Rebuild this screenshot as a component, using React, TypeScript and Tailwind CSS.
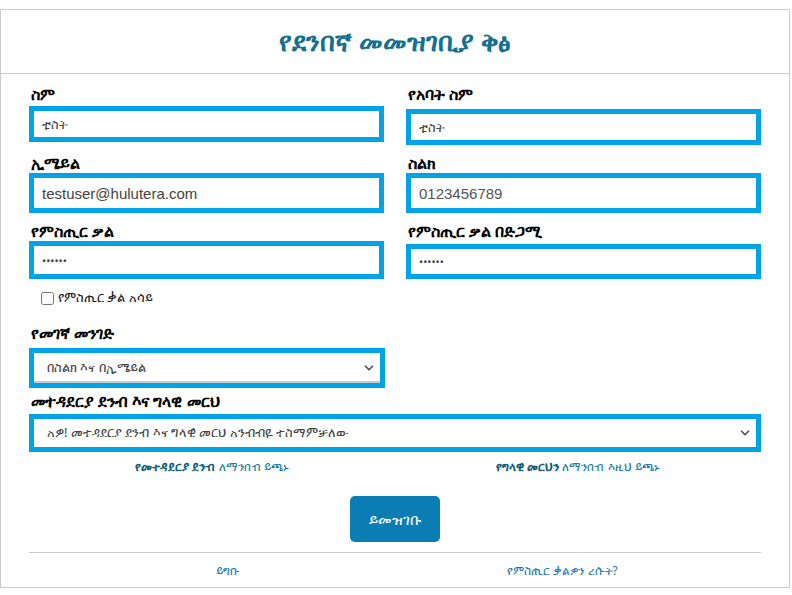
import { ChevronDown } from "lucide-react";

const font = { fontFamily: '"Noto Sans", "DejaVu Sans", "Liberation Sans", sans-serif' };

function Label({ children }: { children: React.ReactNode }) {
	return <label className="block h-[20px] pl-[2px] text-[16px] font-bold leading-[20px] text-black">{children}</label>;
}

const boxCls =
	"block w-full border-[5px] border-[#00a3e8] bg-white px-[8px] text-[#444] outline-none";

export default function App() {
	return (
		<div className="h-[595px] w-full bg-white pt-[9px]" style={font}>
			<div className="mr-[2px] border border-[#cccccc] pb-[8px]">
				<div className="flex h-[64px] items-center justify-center border-b border-[#cccccc]">
					<h1 className="text-[26px] font-bold text-[#14708f]">የደንበኛ መመዝገቢያ ቅፅ</h1>
				</div>

				<form className="px-[28px] pt-[10px]">
					<div className="grid grid-cols-2 gap-x-[22px]">
						<div>
							<Label>ስም</Label>
							<input readOnly defaultValue="ቲስት" className={`${boxCls} mt-[2px] h-[36px] text-[13px]`} />
							<div className="mt-[11px]">
								<Label>ኢሜይል</Label>
							</div>
							<input
								readOnly
								defaultValue="testuser@hulutera.com"
								className={`${boxCls} h-[40px] bg-[#e8f0fe] text-[15px] text-[#222]`}
								style={{ fontFamily: '"Liberation Sans", Arial, sans-serif' }}
							/>
							<div className="mt-[8px]">
								<Label>የምስጢር ቃል</Label>
							</div>
							<input readOnly type="password" defaultValue="123456" className={`${boxCls} h-[38px] text-[11px]`} />
						</div>
						<div>
							<Label>የአባት ስም</Label>
							<input readOnly defaultValue="ቲስት" className={`${boxCls} mt-[5px] h-[36px] text-[13px]`} />
							<div className="mt-[8px]">
								<Label>ስልክ</Label>
							</div>
							<input
								readOnly
								defaultValue="0123456789"
								className={`${boxCls} h-[40px] text-[15px] text-[#555]`}
								style={{ fontFamily: '"Liberation Sans", Arial, sans-serif' }}
							/>
							<div className="mt-[8px]">
								<Label>የምስጢር ቃል በድጋሚ</Label>
							</div>
							<input readOnly type="password" defaultValue="123456" className={`${boxCls} mt-[3px] h-[35px] text-[11px]`} />
						</div>
					</div>

					<label className="mt-[10px] flex h-[18px] items-center gap-[4px] pl-[12px] text-[13px] text-[#222]">
						<input type="checkbox" className="h-[13px] w-[13px]" />
						የምስጢር ቃል አሳይ
					</label>

					<div className="mt-[16px] w-[356px]">
						<Label>የመገኛ መንገድ</Label>
						<div className="relative mt-[5px]">
							<select className={`${boxCls} h-[40px] appearance-none pl-[13px] text-[13px] shadow-[inset_0_-2px_0_#ccc]`}>
								<option>በስልክ እና በኢሜይል</option>
							</select>
							<ChevronDown className="pointer-events-none absolute right-[9px] top-[13px] h-[14px] w-[14px] text-[#555]" strokeWidth={3} />
						</div>
					</div>

					<div className="mt-[3px]">
						<Label>መተዳደርያ ደንብ እና ግላዊ መርህ</Label>
						<div className="relative mt-[3px]">
							<select className={`${boxCls} h-[38px] appearance-none pl-[13px] text-[13px]`}>
								<option>አዎ! መተዳደርያ ደንብ እና ግላዊ መርህ አንብብዬ ተስማምቻለው</option>
							</select>
							<ChevronDown className="pointer-events-none absolute right-[9px] top-[12px] h-[14px] w-[14px] text-[#555]" strokeWidth={3} />
						</div>
					</div>

					<div className="mt-[7px] grid grid-cols-2 text-center text-[12px] leading-[16px]">
						<a href="#" className="text-[#1a7ca0]">
							<b className="text-[#0e5e78]">የመተዳደርያ ደንብ</b> ለማንበብ ይጫኑ
						</a>
						<a href="#" className="text-[#1a7ca0]">
							<b className="text-[#0e5e78]">የግላዊ መርህን</b> ለማንበብ እዚህ ይጫኑ
						</a>
					</div>

					<div className="mt-[21px] flex justify-center">
						<button type="button" className="h-[46px] w-[90px] rounded-[5px] bg-[#0a7db5] text-[15px] text-white">
							ይመዝገቡ
						</button>
					</div>

					<div className="mt-[10px] border-t border-[#cccccc] px-[31px] pt-[10px]">
						<div className="grid grid-cols-2 text-center text-[12px] leading-[16px] text-[#1a7ab0]">
							<a href="#">ይግቡ</a>
							<a href="#">የምስጢር ቃልዎን ረሱት?</a>
						</div>
					</div>
				</form>
			</div>
		</div>
	);
}
